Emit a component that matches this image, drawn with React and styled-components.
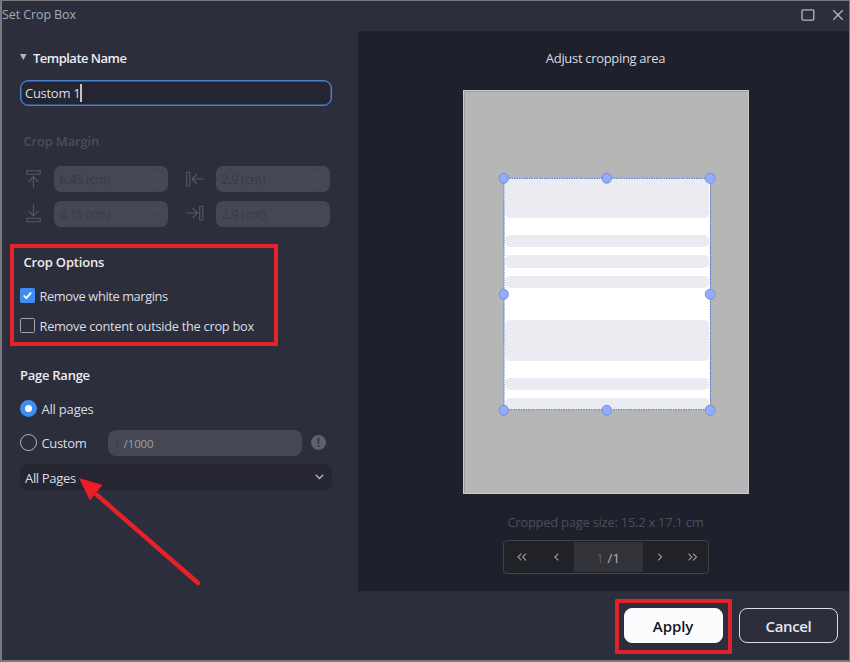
import styled, { createGlobalStyle } from "styled-components";

const App = () => {
  return (
    <>
      <GlobalStyle />
      <Window>
        <TitleBar>
          <Label $size={12.5} $color="#a9abb4" $spacing={-0.1}>
            Set Crop Box
          </Label>
          <WindowButtons>
            <svg width="14" height="12" viewBox="0 0 14 12">
              <rect x="1" y="0.9" width="11.8" height="10.2" rx="1" />
            </svg>
            <svg width="12" height="12" viewBox="0 0 12 12">
              <path d="M1.3 1.3 10.7 10.7M10.7 1.3 1.3 10.7" />
            </svg>
          </WindowButtons>
        </TitleBar>
        <Main>
          <Settings>
            <TemplateHeading>
              <svg width="7" height="6" viewBox="0 0 7 6">
                <path d="M0 0h6.6L3.3 6z" fill="#b4b6bd" />
              </svg>
              <Heading $spacing={-0.52}>Template Name</Heading>
            </TemplateHeading>
            <NameInput>
              <Label $color="#dcdde1" $spacing={-0.28}>
                Custom 1
              </Label>
              <Caret />
            </NameInput>

            <MarginTitle>
              <Heading $color="#4b4d5c" $spacing={-0.18}>
                Crop Margin
              </Heading>
            </MarginTitle>
            <MarginGrid>
              <MarginField side="top" value="6.45 (cm)" />
              <MarginField side="left" value="2.9 (cm)" />
              <MarginField side="bottom" value="6.15 (cm)" />
              <MarginField side="right" value="2.9 (cm)" />
            </MarginGrid>

            <CropOptions>
              <OptionsTitle>
                <Heading $spacing={-0.18}>Crop Options</Heading>
              </OptionsTitle>
              <OptionRow>
                <Checkbox $checked>
                  <svg width="15" height="15" viewBox="0 0 15 15">
                    <path d="M3.7 7.5 6.3 10.2 11.1 4.7" />
                  </svg>
                </Checkbox>
                <Label $size={12.8} $spacing={-0.38}>
                  Remove white margins
                </Label>
              </OptionRow>
              <OptionRow>
                <Checkbox />
                <Label $size={12.8} $spacing={-0.27}>
                  Remove content outside the crop box
                </Label>
              </OptionRow>
            </CropOptions>

            <RangeTitle>
              <Heading $spacing={-0.26}>Page Range</Heading>
            </RangeTitle>
            <RadioRow>
              <Radio $checked />
              <Label $spacing={-0.2}>All pages</Label>
            </RadioRow>
            <RadioRow>
              <Radio />
              <CustomLabel>
                <Label $spacing={-0.33}>Custom</Label>
              </CustomLabel>
              <RangeInput>
                <Label $size={11.5} $color="#393a43">
                  1
                </Label>
                <Label $size={11.5} $color="#a0a1a8" $spacing={-0.12}>
                  /1000
                </Label>
              </RangeInput>
              <Info>!</Info>
            </RadioRow>
            <Select>
              <Label $spacing={-0.33}>All Pages</Label>
              <svg width="9" height="6" viewBox="0 0 9 6">
                <path d="M0.8 0.8 4.5 4.5 8.2 0.8" />
              </svg>
            </Select>
          </Settings>

          <Preview>
            <PreviewTitle>
              <Label $color="#dadbe0" $spacing={-0.32}>
                Adjust cropping area
              </Label>
            </PreviewTitle>
            <Page>
              <CropBox>
                <Bars>
                  {bars.map((bar, i) => (
                    <Bar key={i} $height={bar.height} $gap={bar.gap} />
                  ))}
                </Bars>
                <CropOutline viewBox="0 0 207 232">
                  <rect x="0" y="0" width="207" height="232" />
                </CropOutline>
                {handles.map(([x, y]) => (
                  <Handle key={x + "-" + y} $x={x} $y={y} />
                ))}
              </CropBox>
            </Page>
            <SizeNote>
              <Label $color="#4b4d5a" $spacing={-0.27}>
                Cropped page size: 15.2 x 17.1 cm
              </Label>
            </SizeNote>
            <Pager>
              <PagerButton>
                <Chevrons double />
              </PagerButton>
              <PagerButton>
                <Chevrons />
              </PagerButton>
              <PagerValue>
                <Label $color="#5c5d63">1</Label>
                <Label $color="#b9babe">/1</Label>
              </PagerValue>
              <PagerButton $flip>
                <Chevrons />
              </PagerButton>
              <PagerButton $flip>
                <Chevrons double />
              </PagerButton>
            </Pager>
          </Preview>
        </Main>
        <Footer>
          <Highlight>
            <Button $primary>Apply</Button>
          </Highlight>
          <Button>Cancel</Button>
        </Footer>
        <Arrow width="124" height="112" viewBox="0 0 124 112">
          <path d="M18 17 119 105" stroke="#e62129" strokeWidth="4.4" strokeLinecap="round" />
          <path d="M0 0 23.5 7 11 22.5z" fill="#ee1c25" />
        </Arrow>
      </Window>
    </>
  );
};

// gap is the white space above each bar
const bars = [
  { height: 40, gap: 0 },
  { height: 12.5, gap: 16.5 },
  { height: 12.5, gap: 8 },
  { height: 12.5, gap: 8 },
  { height: 41, gap: 32 },
  { height: 12.5, gap: 16.5 },
  { height: 20, gap: 8 },
];

const handles = [
  [0, 0],
  [50, 0],
  [100, 0],
  [0, 50],
  [100, 50],
  [0, 100],
  [50, 100],
  [100, 100],
];

const sideIcons = {
  top: "M1.7 0.7H15.1V4.3H1.7zM8.4 18V6.6M3.6 11.8 8.4 6.6 13.2 11.8",
  bottom: "M1.7 14.2H15.1V17.8H1.7zM8.4 0.5V11.9M3.6 6.9 8.4 12 13.2 6.9",
  left: "M0.7 2.2H3.8V16H0.7zM17.5 9H6M11 4.1 6 9 11 13.9",
  right: "M13.7 2.2H16.8V16H13.7zM0.3 9H11.5M6.6 4.1 11.6 9 6.6 13.9",
};

const MarginField = ({ side, value }) => (
  <Field>
    <svg width="18" height="19" viewBox="0 0 18 19">
      <path d={sideIcons[side]} />
    </svg>
    <FieldInput>
      <Label $size={12.5} $color="#393a47" $spacing={-0.25}>
        {value}
      </Label>
      <svg width="8" height="15" viewBox="0 0 8 15">
        <path d="M1 4 4 1 7 4M1 11 4 14 7 11" />
      </svg>
    </FieldInput>
  </Field>
);

const Chevrons = ({ double }) => (
  <svg width={double ? 10 : 5} height="8" viewBox={double ? "0 0 10 8" : "0 0 5 8"}>
    <path d={double ? "M4.4 0.6 1 4 4.4 7.4M9 0.6 5.6 4 9 7.4" : "M4.3 0.6 0.9 4 4.3 7.4"} />
  </svg>
);

const GlobalStyle = createGlobalStyle`
  *,
  *::after {
    box-sizing: border-box;
  }

  body {
    margin: 0;
    font-family: "Open Sans", "Noto Sans", sans-serif;
    background: #2c2e3c;
  }

  svg {
    display: block;
    flex: none;
    fill: none;
  }
`;

const Window = styled.div`
  width: 850px;
  height: 662px;
  position: relative;
  display: flex;
  flex-direction: column;
  background: #2c2e3c;
  border: 2px solid #77797d;
  border-top-width: 1px;
  border-right-width: 1px;
  overflow: hidden;
`;

const Label = styled.span`
  font-size: ${(p) => p.$size || 13}px;
  line-height: 18px;
  letter-spacing: ${(p) => p.$spacing || 0}px;
  color: ${(p) => p.$color || "#dcdde2"};
  white-space: nowrap;
`;

const Heading = styled(Label)`
  font-weight: 600;
  font-size: 13px;
  color: ${(p) => p.$color || "#ececf0"};
`;

const TitleBar = styled.div`
  height: 30px;
  flex: none;
  display: flex;
  align-items: center;
  justify-content: space-between;
  padding: 0 5px 2px 0;
`;

const WindowButtons = styled.div`
  display: flex;
  align-items: center;
  gap: 17px;

  svg {
    stroke: #b5b7c0;
    stroke-width: 1.3;
  }
`;

const Main = styled.div`
  height: 560px;
  flex: none;
  display: flex;
`;

const Settings = styled.div`
  width: 356px;
  flex: none;
  display: flex;
  flex-direction: column;
  padding: 18px 26px 0 18px;
`;

const TemplateHeading = styled.div`
  display: flex;
  align-items: center;
  gap: 6px;
  height: 18px;

  svg {
    margin-top: -2px;
  }
`;

const NameInput = styled.div`
  height: 26px;
  margin-top: 12.5px;
  margin-bottom: 0.5px;
  display: flex;
  align-items: center;
  padding: 0 0 0 4px;
  background: #242531;
  border: 1px solid #4680cf;
  border-radius: 8px;
  box-shadow: inset 0 0 0 0.5px #4680cf;
`;

const Caret = styled.span`
  width: 1.5px;
  height: 18px;
  background: #c6c3bd;
`;

const MarginTitle = styled.div`
  height: 18px;
  display: flex;
  margin-top: 26px;
  padding-left: 3.5px;
`;

const MarginGrid = styled.div`
  display: grid;
  grid-template-columns: 148px 149px;
  column-gap: 13px;
  row-gap: 8.5px;
  margin-top: 16px;
`;

const Field = styled.div`
  display: flex;
  align-items: center;
  justify-content: space-between;
  padding-left: 5px;

  svg {
    stroke: #575967;
    stroke-width: 1.1;
  }
`;

const FieldInput = styled.div`
  width: 114px;
  height: 26px;
  display: flex;
  align-items: center;
  justify-content: space-between;
  padding: 2px 8px 0 5.5px;
  background: #454754;
  border-radius: 7px;

  svg {
    margin-top: -2px;
    stroke: #50525e;
    stroke-width: 1;
  }
`;

/* the red frame hangs outside the group's own box */
const CropOptions = styled.div`
  position: relative;
  margin-top: 26px;

  &::after {
    content: "";
    position: absolute;
    left: -10px;
    top: -9px;
    width: 268px;
    height: 102px;
    border: 4px solid #e8222a;
    border-radius: 1px;
  }
`;

const OptionsTitle = styled.div`
  height: 18px;
  display: flex;
  padding-left: 3.5px;
  margin-bottom: 10px;
`;

const OptionRow = styled.div`
  height: 30px;
  display: flex;
  align-items: center;
  gap: 4.5px;
`;

const Checkbox = styled.span`
  width: 15px;
  height: 15px;
  flex: none;
  margin-top: -1px;
  border-radius: 1.5px;
  background: ${(p) => (p.$checked ? "#3f8cf3" : "transparent")};
  border: ${(p) => (p.$checked ? "none" : "1px solid #a2a4ac")};

  svg {
    stroke: #fff;
    stroke-width: 1.8;
  }
`;

const RangeTitle = styled.div`
  height: 18px;
  display: flex;
  margin-top: 25px;
`;

const RadioRow = styled.div`
  height: 34px;
  display: flex;
  align-items: center;

  ${RangeTitle} + & {
    margin-top: 8px;
  }
`;

const Radio = styled.span`
  width: 17px;
  height: 17px;
  flex: none;
  margin-right: 4.5px;
  margin-top: -1px;
  border-radius: 50%;
  background: ${(p) => (p.$checked ? "#fff" : "transparent")};
  border: ${(p) => (p.$checked ? "5.4px solid #3f8cf3" : "1.3px solid #b6b8c0")};
`;

const CustomLabel = styled.div`
  width: 66px;
  display: flex;
  padding-top: 1px;
`;

const RangeInput = styled.div`
  width: 194px;
  height: 26px;
  display: flex;
  align-items: center;
  gap: 3.5px;
  padding: 2px 0 0 6px;
  background: #454754;
  border-radius: 8px;
`;

const Info = styled.span`
  width: 15px;
  height: 15px;
  margin-left: 9.5px;
  display: flex;
  align-items: center;
  justify-content: center;
  font-size: 12px;
  font-weight: 600;
  color: #2c2e3a;
  background: #5f6069;
  border-radius: 50%;
`;

const Select = styled.div`
  height: 26px;
  margin-top: 4px;
  display: flex;
  align-items: center;
  justify-content: space-between;
  padding: 3px 8px 0 5px;
  background: #252631;
  border-radius: 7px;

  svg {
    margin-top: -2px;
    stroke: #b4b6bd;
    stroke-width: 1.3;
  }
`;

const Preview = styled.div`
  flex: 1;
  display: flex;
  flex-direction: column;
  align-items: center;
  padding: 18px 0 0 4px;
  background: #1e202b;
`;

const PreviewTitle = styled.div`
  height: 18px;
  display: flex;
`;

const Page = styled.div`
  width: 286px;
  height: 404px;
  flex: none;
  margin-top: 23px;
  padding: 87px 0 0 40px;
  background: #b6b6b6;
  border: 1px solid #c9c9c9;
  box-shadow: inset 1px 1px 0 #a0a0a0;
`;

const CropBox = styled.div`
  width: 206.5px;
  height: 232px;
  position: relative;
  background: #fff;
`;

const Bars = styled.div`
  height: 100%;
  padding: 0 1px;
  overflow: hidden;
`;

const Bar = styled.div`
  height: ${(p) => p.$height}px;
  margin-top: ${(p) => p.$gap}px;
  background: #ebecf1;
  border-radius: 5px;
`;

const CropOutline = styled.svg`
  position: absolute;
  left: 0;
  top: 0;
  width: 206.5px;
  height: 232px;
  overflow: visible;
  stroke: #5b82d6;
  stroke-width: 1.2;
  stroke-dasharray: 1.6 0.9;
`;

const Handle = styled.span`
  width: 10.5px;
  height: 10.5px;
  position: absolute;
  left: ${(p) => p.$x}%;
  top: ${(p) => p.$y}%;
  transform: translate(-50%, -50%);
  background: #93acfe;
  border: 1px solid #7290e0;
  border-radius: 50%;
`;

const SizeNote = styled.div`
  height: 18px;
  display: flex;
  margin-top: 19px;
`;

const Pager = styled.div`
  width: 206px;
  height: 34px;
  flex: none;
  display: flex;
  margin-top: 9px;
  padding: 1px 0;
  background: #212227;
  border: 1px solid #414248;
  border-radius: 4px;
`;

const PagerButton = styled.div`
  width: ${(p) => (p.$flip ? 32.5 : 35)}px;
  flex: none;
  display: flex;
  align-items: center;
  justify-content: center;
  transform: ${(p) => (p.$flip ? "scaleX(-1)" : "none")};
  padding: ${(p) => (p.$flip ? "0 2px 0 0" : "0 0 0 1px")};

  svg {
    stroke: #96979c;
    stroke-width: 1.2;
  }
`;

const PagerValue = styled.div`
  width: 69px;
  flex: none;
  display: flex;
  align-items: center;
  justify-content: center;
  gap: 4px;
  padding-top: 2px;
  background: #323338;
`;

const Footer = styled.div`
  flex: 1;
  display: flex;
  align-items: center;
  justify-content: flex-end;
  gap: 7px;
  padding: 0 11px 0 0;
`;

const Highlight = styled.div`
  padding: 5px 5.5px 7px 5px;
  margin-top: 2px;
  border: 4px solid #e3212a;
  border-radius: 1px;
`;

const Button = styled.div`
  width: 99px;
  height: 35px;
  display: flex;
  align-items: center;
  justify-content: center;
  padding-top: 1px;
  font-size: 15px;
  font-weight: 600;
  line-height: 20px;
  letter-spacing: ${(p) => (p.$primary ? -0.1 : -0.35)}px;
  color: ${(p) => (p.$primary ? "#15161b" : "#e6e7eb")};
  background: ${(p) => (p.$primary ? "#fcfcfe" : "transparent")};
  border: 1.2px solid ${(p) => (p.$primary ? "#fcfcfe" : "#dddee3")};
  border-radius: 8px;
`;

/* callout arrow drawn over the window */
const Arrow = styled.svg`
  position: absolute;
  left: 76.5px;
  top: 477px;
`;

export default App;
